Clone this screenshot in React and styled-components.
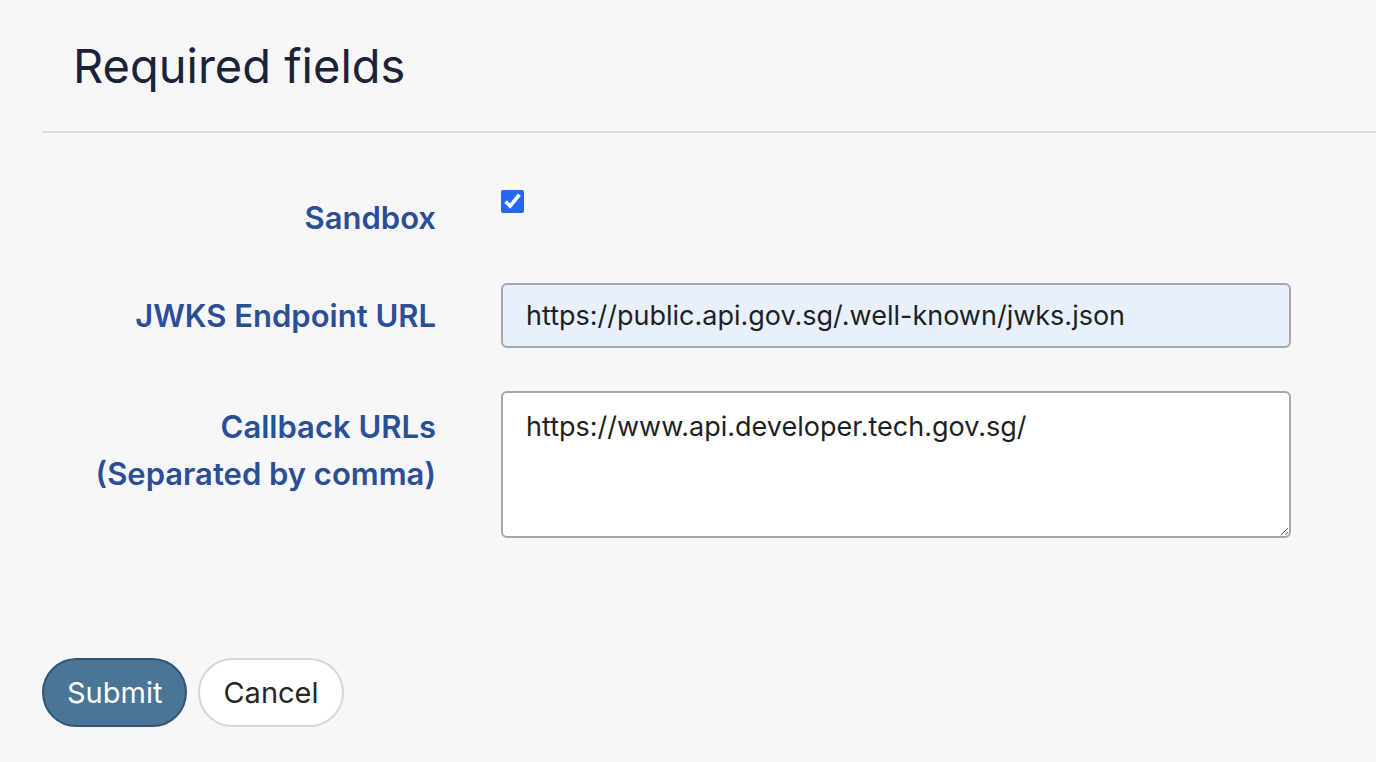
import React from 'react'
import styled, { createGlobalStyle } from 'styled-components'

const GlobalStyle = createGlobalStyle`
  html, body {
    margin: 0;
    padding: 0;
    background: #f7f7f9;
    font-family: Inter, "Noto Sans", sans-serif;
  }
`

const Page = styled.div`
  padding: 0 0 0 42px;
  height: 762px;
  box-sizing: border-box;
  overflow: hidden;
`

const Header = styled.div`
  padding: 38px 0 37px 31px;
  border-bottom: 2px solid #dcdcdf;

  h2 {
    margin: 0;
    font-size: 47px;
    font-weight: 400;
    line-height: 56px;
    color: #1b2336;
  }
`

const Form = styled.form`
  padding-top: 57px;
  padding-right: 85px;
`

const Row = styled.div`
  display: grid;
  grid-template-columns: 394px 1fr;
  column-gap: 65px;
  align-items: ${p => p.$align || 'center'};
  margin-bottom: ${p => p.$gap || 0}px;
`

const Label = styled.label`
  text-align: right;
  font-size: 31px;
  font-weight: 600;
  line-height: 47px;
  color: #2b4f96;
  padding-top: ${p => p.$top || 0}px;
`

const Check = styled.input`
  width: 23px;
  height: 23px;
  margin: 0;
  accent-color: #2468f2;
  align-self: start;
`

const TextInput = styled.input`
  box-sizing: border-box;
  width: 100%;
  height: 65px;
  padding: 0 23px;
  border: 2px solid #a4a8ad;
  border-radius: 6px;
  background: #e8f0fe;
  font-family: Inter, "Noto Sans", sans-serif;
  font-size: 27px;
  color: #1f1f1f;
  outline: none;
`

const TextArea = styled.textarea`
  box-sizing: border-box;
  width: 100%;
  height: 147px;
  padding: 16px 23px;
  border: 2px solid #a4a8ad;
  border-radius: 6px;
  background: #fff;
  font-family: Inter, "Noto Sans", sans-serif;
  font-size: 27px;
  line-height: 36px;
  color: #1f1f1f;
  outline: none;
  resize: vertical;
`

const Actions = styled.div`
  display: flex;
  gap: 11px;
  margin-top: 120px;
`

const Button = styled.button`
  height: 69px;
  padding: 0 23px;
  border-radius: 35px;
  font-family: Inter, "Noto Sans", sans-serif;
  font-size: 29px;
  cursor: pointer;
  background: ${p => (p.$primary ? '#4a7594' : '#fff')};
  color: ${p => (p.$primary ? '#fff' : '#262626')};
  border: 2px solid ${p => (p.$primary ? '#2f5676' : '#d6d6d6')};
`

const App = () => {
  return (
    <Page>
      <GlobalStyle />
      <Header>
        <h2>Required fields</h2>
      </Header>
      <Form onSubmit={e => e.preventDefault()}>
        <Row $align='start' $gap={42}>
          <Label $top={4}>Sandbox</Label>
          <div>
            <Check type='checkbox' defaultChecked />
          </div>
        </Row>
        <Row $gap={43}>
          <Label>JWKS Endpoint URL</Label>
          <TextInput defaultValue='https://public.api.gov.sg/.well-known/jwks.json' />
        </Row>
        <Row $align='start'>
          <Label $top={12}>Callback URLs<br />(Separated by comma)</Label>
          <TextArea defaultValue='https://www.api.developer.tech.gov.sg/' />
        </Row>
        <Actions>
          <Button $primary type='submit'>Submit</Button>
          <Button type='button'>Cancel</Button>
        </Actions>
      </Form>
    </Page>
  )
}

export default App
